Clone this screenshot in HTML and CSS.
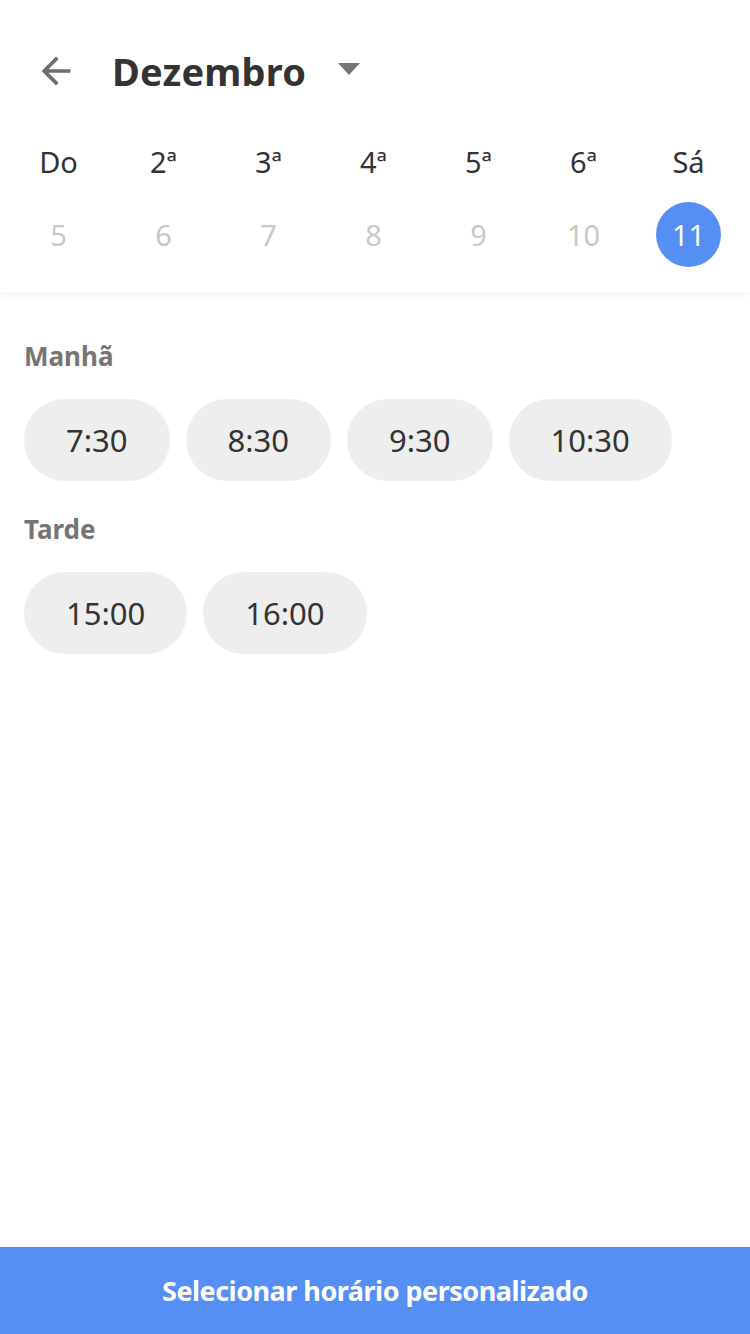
FILE: index.html
```html
<!DOCTYPE html>
<html lang="pt">
<head>
<meta charset="utf-8">
<link rel="stylesheet" href="styles.css">
</head>
<body>
<div class="app">
  <header class="top">
    <div class="bar">
      <svg class="back" width="36" height="36" viewBox="2 2 20 20"><path d="M20 11H7.83l5.59-5.59L12 4l-8 8 8 8 1.41-1.41L7.83 13H20v-2z" fill="#6e6e6e"/></svg>
      <h1 class="month">Dezembro</h1>
      <svg class="caret" width="24" height="14" viewBox="0 0 24 14"><path d="M1 1h22L12 13z" fill="#757575"/></svg>
    </div>
    <div class="week">
      <span class="wd">Do</span><span class="wd">2ª</span><span class="wd">3ª</span><span class="wd">4ª</span><span class="wd">5ª</span><span class="wd">6ª</span><span class="wd">Sá</span>
    </div>
    <div class="week days">
      <span class="d">5</span><span class="d">6</span><span class="d">7</span><span class="d">8</span><span class="d">9</span><span class="d">10</span><span class="d"><span class="sel">11</span></span>
    </div>
  </header>
  <main class="content">
    <section class="group">
      <h2 class="label">Manhã</h2>
      <div class="chips">
        <span class="chip">7:30</span><span class="chip">8:30</span><span class="chip">9:30</span><span class="chip">10:30</span>
      </div>
    </section>
    <section class="group">
      <h2 class="label">Tarde</h2>
      <div class="chips">
        <span class="chip">15:00</span><span class="chip">16:00</span>
      </div>
    </section>
  </main>
  <button class="cta">Selecionar horário personalizado</button>
</div>
</body>
</html>
```
FILE: styles.css
```css
* { box-sizing: border-box; margin: 0; padding: 0; }
html, body { width: 750px; height: 1334px; background: #fff; }
body { font-family: "Noto Sans", "Open Sans", sans-serif; color: #333; overflow: hidden; }
.app { display: flex; flex-direction: column; height: 1334px; }
.top { background: #fff; box-shadow: 0 2px 8px rgba(0,0,0,0.06); height: 292px; position: relative; z-index: 1; }
.bar { display: flex; align-items: center; height: 142px; padding-left: 38px; }
.back { display: block; }
.month { font-size: 38px; font-weight: 700; color: #333; margin-left: 38px; letter-spacing: 0.2px; }
.caret { margin-left: 31px; margin-top: -4px; }
.week { display: grid; grid-template-columns: repeat(7, 105px); padding-left: 6px; }
.wd { text-align: center; font-size: 29px; color: #333; line-height: 40px; }
.days { margin-top: 19px; }
.d { display: flex; justify-content: center; align-items: center; font-size: 29px; color: #c8c8c8; height: 66px; }
.sel { display: flex; justify-content: center; align-items: center; width: 65px; height: 65px; border-radius: 50%; background: #558ff3; color: #fff; }
.content { flex: 1; padding: 46px 24px 0; }
.group + .group { margin-top: 30px; }
.label { font-size: 26px; font-weight: 700; color: #757575; line-height: 36px; }
.chips { display: flex; gap: 16px; margin-top: 25px; }
.chip { display: flex; align-items: center; justify-content: center; height: 82px; padding: 0 42px; border-radius: 41px; background: #eeeeee; font-size: 31px; color: #333; }
.cta { height: 87px; border: none; background: #558ff3; color: #fff; font-family: "Noto Sans", "Open Sans", sans-serif; font-size: 27px; font-weight: 700; letter-spacing: -0.5px; }
```
